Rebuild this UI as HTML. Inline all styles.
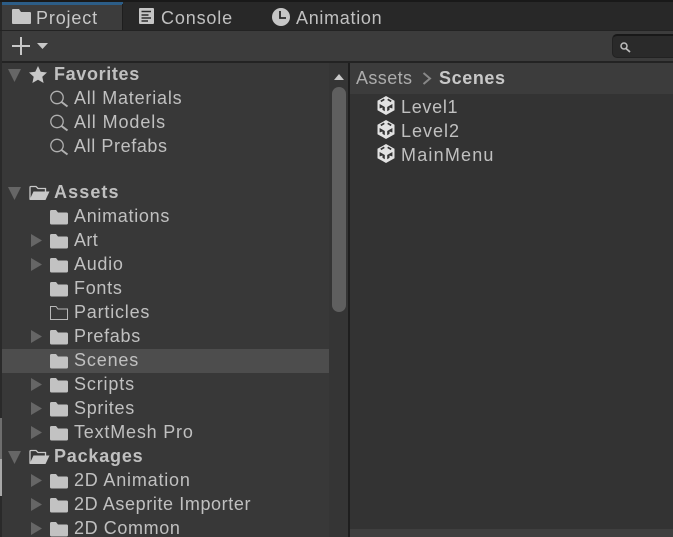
<!DOCTYPE html>
<html>
<head>
<meta charset="utf-8">
<style>
html,body{margin:0;padding:0;width:673px;height:537px;overflow:hidden;background:#383838}
body{position:relative;font-family:"Liberation Sans",sans-serif;font-size:18px;color:#c0c0c0;letter-spacing:.7px}
.a{position:absolute}
.t{position:absolute;white-space:nowrap;line-height:24px;height:24px}
.b{font-weight:bold;letter-spacing:.9px}
svg{position:absolute;overflow:visible}
</style>
</head>
<body>
<svg width="0" height="0" style="position:absolute">
<defs>
<path id="folder" d="M0 2.500Q0 1 1.500 1H6L8 3.500H16.500Q18 3.500 18 5V14Q18 15.500 16.500 15.500H1.500Q0 15.500 0 14Z" fill="#c2c2c2"/>
<path id="right" d="M0 0L11 6.500L0 13Z" fill="#666"/>
<path id="down" d="M0 0H13L6.500 13Z" fill="#666"/>
<g id="mag" fill="none" stroke="#b0b0b0"><circle cx="7" cy="7.500" r="6.200" stroke-width="1.300"/><path d="M11.500 12L17.500 16.500" stroke-width="2"/></g>
<g id="open"><path d="M1 15.500V3.500Q1 2.500 2 2.500H7L9 4.500H16.500V7.500" fill="none" stroke="#c8c8c8" stroke-width="1.300"/><path d="M4.500 7.500H20.500L16.500 16H.5Z" fill="#c8c8c8"/></g>
<g id="unity"><path d="M9 0L17.500 4.800V14.200L9 19L.5 14.200V4.800Z" fill="#e2e2e2"/><path d="M7.300 3.300L3.800 5.400M10.700 3.300L14.200 5.400" stroke="#333" stroke-width="1.700"/><path d="M2.600 8L7.800 11V15.300L5.500 13.900V11.500L2.600 12.500Z M15.400 8L10.200 11V15.300L12.500 13.900V11.500L15.400 12.500Z" fill="#333"/></g>
</defs>
</svg>

<!-- top tab bar -->
<div class="a" style="left:0;top:0;width:673px;height:31px;background:#282828"></div>
<div class="a" style="left:0;top:0;width:673px;height:2px;background:#191919"></div>
<div class="a" style="left:2px;top:2px;width:120px;height:28px;background:#3c3c3c"></div>
<div class="a" style="left:2px;top:2px;width:121px;height:3px;background:#2c5d87"></div>
<div class="a" style="left:122px;top:4px;width:1px;height:26px;background:#1e1e1e"></div>
<div class="a" style="left:0;top:30px;width:673px;height:1px;background:#232323"></div>
<svg style="left:12px;top:8px" width="19" height="17"><path d="M0 2Q0 1 1 1H7L9 4H18Q19 4 19 5V15Q19 16 18 16H1Q0 16 0 15Z" fill="#c6c6c6"/></svg>
<div class="t" style="left:36px;top:6px;color:#c8c8c8;letter-spacing:.85px">Project</div>
<svg style="left:139px;top:8px" width="15" height="17"><rect width="15" height="16" rx="1" fill="#c6c6c6"/><path d="M2.500 3.500H12M2.500 7H9.500M2.500 10H12M2.500 13H9" stroke="#2c2c2c" stroke-width="1.400"/></svg>
<div class="t" style="left:161px;top:6px;letter-spacing:.85px">Console</div>
<svg style="left:272px;top:8px" width="18" height="18"><circle cx="9" cy="9" r="9" fill="#c6c6c6"/><path d="M8 3V10H14" fill="none" stroke="#282828" stroke-width="1.800"/></svg>
<div class="t" style="left:296px;top:6px">Animation</div>

<!-- toolbar -->
<div class="a" style="left:2px;top:31px;width:671px;height:30px;background:#3c3c3c"></div>
<div class="a" style="left:0;top:61px;width:673px;height:2px;background:#232323"></div>
<svg style="left:12px;top:37px" width="32" height="18"><path d="M9 0V18M0 9H18" stroke="#c8c8c8" stroke-width="2"/><path d="M25 6H36L30.500 12Z" fill="#c8c8c8"/></svg>
<div class="a" style="left:612px;top:34px;width:70px;height:24px;box-sizing:border-box;border-radius:5px;background:#2a2a2a;border:1px solid #222;border-top:2px solid #181818"></div>
<svg style="left:620px;top:42px" width="11" height="11"><circle cx="4" cy="4" r="3" fill="none" stroke="#bdbdbd" stroke-width="1.500"/><path d="M6 6.500L10 10" stroke="#bdbdbd" stroke-width="1.800"/></svg>

<!-- left strip -->
<div class="a" style="left:0;top:31px;width:2px;height:506px;background:#2a2a2a"></div>
<div class="a" style="left:0;top:418px;width:2px;height:41px;background:#6e6e6e"></div>
<div class="a" style="left:0;top:459px;width:2px;height:37px;background:#a8a8a8"></div>

<!-- tree panel -->
<div class="a" style="left:2px;top:63px;width:346px;height:474px;background:#383838"></div>
<div class="a" style="left:2px;top:349px;width:327px;height:24px;background:#4d4d4d"></div>

<!-- scrollbar -->
<div class="a" style="left:329px;top:63px;width:19px;height:474px;background:#353535"></div>
<div class="a" style="left:332px;top:87px;width:14px;height:225px;border-radius:7px;background:#5f5f5f"></div>
<svg style="left:334px;top:74px" width="10" height="6"><path d="M0 6H10L5 0Z" fill="#c8c8c8"/></svg>
<div class="a" style="left:348px;top:63px;width:2px;height:474px;background:#1e1e1e"></div>

<!-- right panel -->
<div class="a" style="left:350px;top:63px;width:323px;height:474px;background:#333"></div>
<div class="a" style="left:350px;top:63px;width:323px;height:31px;background:#3c3c3c"></div>
<div class="a" style="left:350px;top:529px;width:323px;height:8px;background:#3f3f3f"></div>
<div class="t" style="left:356px;top:66px;color:#acacac;letter-spacing:.4px">Assets</div>
<svg style="left:422px;top:72px" width="10" height="13"><path d="M1.500 1L8 6.500L1.500 12" fill="none" stroke="#888" stroke-width="2"/></svg>
<div class="t b" style="left:439px;top:66px;color:#c8c8c8;letter-spacing:.6px">Scenes</div>

<svg style="left:377px;top:96px" width="18" height="19"><use href="#unity"/></svg>
<div class="t" style="left:401px;top:95px">Level1</div>
<svg style="left:377px;top:120px" width="18" height="19"><use href="#unity"/></svg>
<div class="t" style="left:401px;top:119px;letter-spacing:1px">Level2</div>
<svg style="left:377px;top:144px" width="18" height="19"><use href="#unity"/></svg>
<div class="t" style="left:401px;top:143px;letter-spacing:1.200px">MainMenu</div>

<!-- favorites -->
<svg style="left:8px;top:69px" width="13" height="13"><use href="#down"/></svg>
<svg style="left:29px;top:66px" width="18" height="17"><path d="M9 0L11.700 5.800L18 6.500L13.300 10.800L14.600 17L9 13.800L3.400 17L4.700 10.800L0 6.500L6.300 5.800Z" fill="#c8c8c8"/></svg>
<div class="t b" style="left:54px;top:62px;letter-spacing:.65px">Favorites</div>
<svg style="left:50px;top:90px" width="18" height="17"><use href="#mag"/></svg>
<div class="t" style="left:74px;top:86px;letter-spacing:.8px">All Materials</div>
<svg style="left:50px;top:114px" width="18" height="17"><use href="#mag"/></svg>
<div class="t" style="left:74px;top:110px;letter-spacing:.9px">All Models</div>
<svg style="left:50px;top:138px" width="18" height="17"><use href="#mag"/></svg>
<div class="t" style="left:74px;top:134px;letter-spacing:.6px">All Prefabs</div>

<!-- assets -->
<svg style="left:8px;top:187px" width="13" height="13"><use href="#down"/></svg>
<svg style="left:29px;top:184px" width="21" height="17"><use href="#open"/></svg>
<div class="t b" style="left:54px;top:180px;letter-spacing:1.100px">Assets</div>

<svg style="left:50px;top:209px" width="18" height="16"><use href="#folder"/></svg>
<div class="t" style="left:74px;top:204px">Animations</div>

<svg style="left:31px;top:234px" width="11" height="13"><use href="#right"/></svg>
<svg style="left:50px;top:233px" width="18" height="16"><use href="#folder"/></svg>
<div class="t" style="left:74px;top:228px;letter-spacing:.4px">Art</div>

<svg style="left:31px;top:258px" width="11" height="13"><use href="#right"/></svg>
<svg style="left:50px;top:257px" width="18" height="16"><use href="#folder"/></svg>
<div class="t" style="left:74px;top:252px">Audio</div>

<svg style="left:50px;top:281px" width="18" height="16"><use href="#folder"/></svg>
<div class="t" style="left:74px;top:276px">Fonts</div>

<svg style="left:50px;top:305px" width="18" height="16"><path d="M.5 14.500V1.500H6L8 4H17.500V14.500Z" fill="none" stroke="#b8b8b8"/></svg>
<div class="t" style="left:74px;top:300px;letter-spacing:.8px">Particles</div>

<svg style="left:31px;top:330px" width="11" height="13"><use href="#right"/></svg>
<svg style="left:50px;top:329px" width="18" height="16"><use href="#folder"/></svg>
<div class="t" style="left:74px;top:324px">Prefabs</div>

<svg style="left:50px;top:353px" width="18" height="16"><use href="#folder"/></svg>
<div class="t" style="left:74px;top:348px;letter-spacing:.85px">Scenes</div>

<svg style="left:31px;top:378px" width="11" height="13"><use href="#right"/></svg>
<svg style="left:50px;top:377px" width="18" height="16"><use href="#folder"/></svg>
<div class="t" style="left:74px;top:372px;letter-spacing:.85px">Scripts</div>

<svg style="left:31px;top:402px" width="11" height="13"><use href="#right"/></svg>
<svg style="left:50px;top:401px" width="18" height="16"><use href="#folder"/></svg>
<div class="t" style="left:74px;top:396px">Sprites</div>

<svg style="left:31px;top:426px" width="11" height="13"><use href="#right"/></svg>
<svg style="left:50px;top:425px" width="18" height="16"><use href="#folder"/></svg>
<div class="t" style="left:74px;top:420px;letter-spacing:.8px">TextMesh Pro</div>

<!-- packages -->
<svg style="left:8px;top:451px" width="13" height="13"><use href="#down"/></svg>
<svg style="left:29px;top:448px" width="21" height="17"><use href="#open"/></svg>
<div class="t b" style="left:54px;top:444px;letter-spacing:.8px">Packages</div>

<svg style="left:31px;top:474px" width="11" height="13"><use href="#right"/></svg>
<svg style="left:50px;top:473px" width="18" height="16"><use href="#folder"/></svg>
<div class="t" style="left:74px;top:468px;letter-spacing:.8px">2D Animation</div>

<svg style="left:31px;top:498px" width="11" height="13"><use href="#right"/></svg>
<svg style="left:50px;top:497px" width="18" height="16"><use href="#folder"/></svg>
<div class="t" style="left:74px;top:492px;letter-spacing:.6px">2D Aseprite Importer</div>

<svg style="left:31px;top:522px" width="11" height="13"><use href="#right"/></svg>
<svg style="left:50px;top:521px" width="18" height="16"><use href="#folder"/></svg>
<div class="t" style="left:74px;top:516px;letter-spacing:.6px">2D Common</div>
</body>
</html>
